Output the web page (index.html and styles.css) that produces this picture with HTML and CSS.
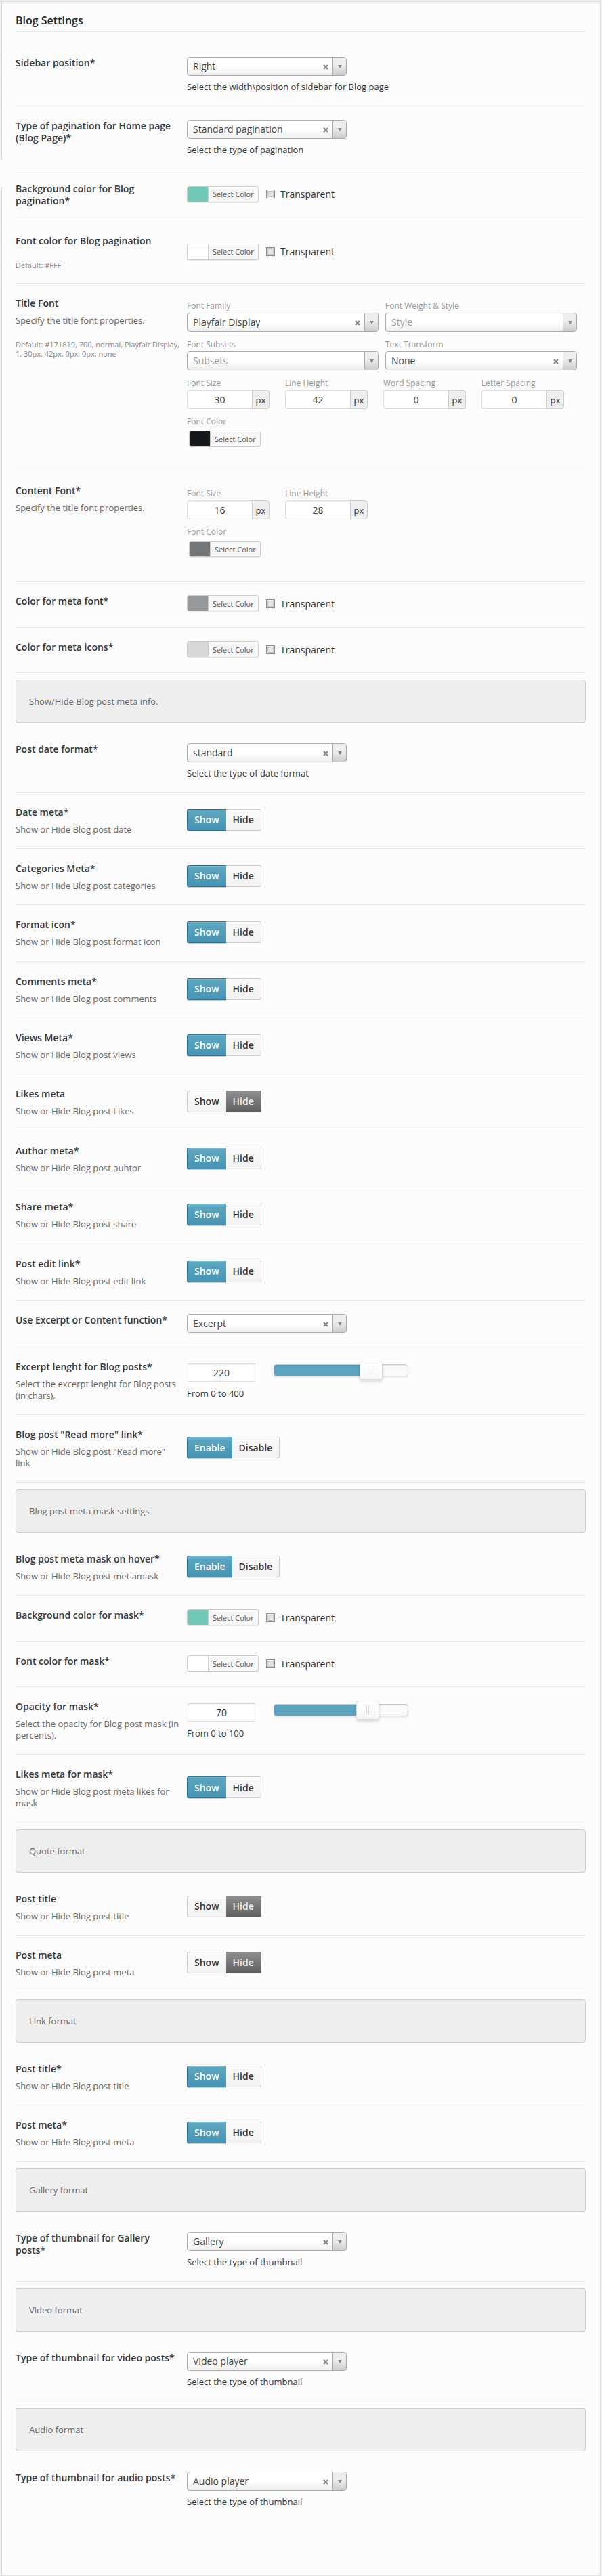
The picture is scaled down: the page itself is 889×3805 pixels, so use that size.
FILE: index.html
```
<!DOCTYPE html>
<html lang="en">
<head>
<meta charset="utf-8">
<meta name="viewport" content="width=device-width, initial-scale=1">
<title>Blog Settings</title>
<link rel="stylesheet" href="styles.css">
</head>
<body>
<div class="shell">
<div class="rail" aria-hidden="true">
<span class="rail-item"></span><span class="rail-item"></span><span class="rail-item"></span><span class="rail-item"></span><span class="rail-item"></span><span class="rail-item"></span>
<span class="rail-item rail-current"></span>
<span class="rail-item"></span><span class="rail-item"></span><span class="rail-item"></span><span class="rail-item"></span><span class="rail-rest"></span>
</div>
<main class="panel">
<h1 class="heading">Blog Settings</h1>

<section class="group">
<div class="row">
<div class="info"><label class="title" for="sidebar">Sidebar position*</label></div>
<div class="control"><div class="pick"><select id="sidebar"><option>Right</option></select><button class="clear" type="button" aria-label="Clear"><svg viewBox="0 0 8 8"><path d="M1 1L7 7M7 1L1 7"/></svg></button></div><p class="help">Select the width\position of sidebar for Blog page</p></div>
</div>
<div class="row">
<div class="info"><label class="title" for="pagination">Type of pagination for Home page (Blog Page)*</label></div>
<div class="control"><div class="pick"><select id="pagination"><option>Standard pagination</option></select><button class="clear" type="button" aria-label="Clear"><svg viewBox="0 0 8 8"><path d="M1 1L7 7M7 1L1 7"/></svg></button></div><p class="help">Select the type of pagination</p></div>
</div>
<div class="row loose">
<div class="info"><span class="title">Background color for Blog pagination*</span></div>
<div class="control color"><button class="swatch" type="button"><i class="teal"></i>Select Color</button><label class="check"><input type="checkbox">Transparent</label></div>
</div>
<div class="row">
<div class="info"><span class="title">Font color for Blog pagination</span><p class="default">Default: #FFF</p></div>
<div class="control color"><button class="swatch" type="button"><i class="white"></i>Select Color</button><label class="check"><input type="checkbox">Transparent</label></div>
</div>
<div class="row">
<div class="info"><span class="title">Title Font</span><p class="desc">Specify the title font properties.</p><p class="default">Default: #171819, 700, normal, Playfair Display, 1, 30px, 42px, 0px, 0px, none</p></div>
<div class="control fonts">
<div class="pair">
<div class="field"><label for="family">Font Family</label><div class="pick"><select id="family"><option>Playfair Display</option></select><button class="clear" type="button" aria-label="Clear"><svg viewBox="0 0 8 8"><path d="M1 1L7 7M7 1L1 7"/></svg></button></div></div>
<div class="field"><label for="weight">Font Weight &amp; Style</label><div class="pick empty"><select id="weight"><option>Style</option></select></div></div>
<div class="field"><label for="subsets">Font Subsets</label><div class="pick empty"><select id="subsets"><option>Subsets</option></select></div></div>
<div class="field"><label for="transform">Text Transform</label><div class="pick"><select id="transform"><option>None</option></select><button class="clear" type="button" aria-label="Clear"><svg viewBox="0 0 8 8"><path d="M1 1L7 7M7 1L1 7"/></svg></button></div></div>
</div>
<div class="units">
<div class="field"><label for="size1">Font Size</label><div class="unit"><input id="size1" type="text" value="30"><span>px</span></div></div>
<div class="field"><label for="line1">Line Height</label><div class="unit"><input id="line1" type="text" value="42"><span>px</span></div></div>
<div class="field"><label for="word1">Word Spacing</label><div class="unit"><input id="word1" type="text" value="0"><span>px</span></div></div>
<div class="field"><label for="letter1">Letter Spacing</label><div class="unit"><input id="letter1" type="text" value="0"><span>px</span></div></div>
</div>
<div class="field inset"><label for="color1">Font Color</label><button class="swatch" id="color1" type="button"><i class="ink"></i>Select Color</button></div>
</div>
</div>
<div class="row">
<div class="info"><span class="title">Content Font*</span><p class="desc">Specify the title font properties.</p></div>
<div class="control fonts">
<div class="units">
<div class="field"><label for="size2">Font Size</label><div class="unit"><input id="size2" type="text" value="16"><span>px</span></div></div>
<div class="field"><label for="line2">Line Height</label><div class="unit"><input id="line2" type="text" value="28"><span>px</span></div></div>
</div>
<div class="field inset"><label for="color2">Font Color</label><button class="swatch" id="color2" type="button"><i class="slate"></i>Select Color</button></div>
</div>
</div>
<div class="row loose">
<div class="info"><span class="title">Color for meta font*</span></div>
<div class="control color"><button class="swatch" type="button"><i class="gray"></i>Select Color</button><label class="check"><input type="checkbox">Transparent</label></div>
</div>
<div class="row">
<div class="info"><span class="title">Color for meta icons*</span></div>
<div class="control color"><button class="swatch" type="button"><i class="silver"></i>Select Color</button><label class="check"><input type="checkbox">Transparent</label></div>
</div>
</section>

<p class="banner">Show/Hide Blog post meta info.</p>

<section class="group">
<div class="row">
<div class="info"><label class="title" for="dateformat">Post date format*</label></div>
<div class="control"><div class="pick"><select id="dateformat"><option>standard</option></select><button class="clear" type="button" aria-label="Clear"><svg viewBox="0 0 8 8"><path d="M1 1L7 7M7 1L1 7"/></svg></button></div><p class="help">Select the type of date format</p></div>
</div>
<div class="row">
<div class="info"><span class="title">Date meta*</span><p class="desc">Show or Hide Blog post date</p></div>
<div class="control toggle"><button class="on" type="button" aria-pressed="true">Show</button><button type="button">Hide</button></div>
</div>
<div class="row">
<div class="info"><span class="title">Categories Meta*</span><p class="desc">Show or Hide Blog post categories</p></div>
<div class="control toggle"><button class="on" type="button" aria-pressed="true">Show</button><button type="button">Hide</button></div>
</div>
<div class="row loose">
<div class="info"><span class="title">Format icon*</span><p class="desc">Show or Hide Blog post format icon</p></div>
<div class="control toggle"><button class="on" type="button" aria-pressed="true">Show</button><button type="button">Hide</button></div>
</div>
<div class="row">
<div class="info"><span class="title">Comments meta*</span><p class="desc">Show or Hide Blog post comments</p></div>
<div class="control toggle"><button class="on" type="button" aria-pressed="true">Show</button><button type="button">Hide</button></div>
</div>
<div class="row">
<div class="info"><span class="title">Views Meta*</span><p class="desc">Show or Hide Blog post views</p></div>
<div class="control toggle"><button class="on" type="button" aria-pressed="true">Show</button><button type="button">Hide</button></div>
</div>
<div class="row loose">
<div class="info"><span class="title">Likes meta</span><p class="desc">Show or Hide Blog post Likes</p></div>
<div class="control toggle"><button type="button">Show</button><button class="off" type="button" aria-pressed="true">Hide</button></div>
</div>
<div class="row">
<div class="info"><span class="title">Author meta*</span><p class="desc">Show or Hide Blog post auhtor</p></div>
<div class="control toggle"><button class="on" type="button" aria-pressed="true">Show</button><button type="button">Hide</button></div>
</div>
<div class="row loose">
<div class="info"><span class="title">Share meta*</span><p class="desc">Show or Hide Blog post share</p></div>
<div class="control toggle"><button class="on" type="button" aria-pressed="true">Show</button><button type="button">Hide</button></div>
</div>
<div class="row">
<div class="info"><span class="title">Post edit link*</span><p class="desc">Show or Hide Blog post edit link</p></div>
<div class="control toggle"><button class="on" type="button" aria-pressed="true">Show</button><button type="button">Hide</button></div>
</div>
<div class="row loose">
<div class="info"><label class="title" for="excerpt">Use Excerpt or Content function*</label></div>
<div class="control"><div class="pick"><select id="excerpt"><option>Excerpt</option></select><button class="clear" type="button" aria-label="Clear"><svg viewBox="0 0 8 8"><path d="M1 1L7 7M7 1L1 7"/></svg></button></div></div>
</div>
<div class="row">
<div class="info"><label class="title" for="length">Excerpt lenght for Blog posts*</label><p class="desc">Select the excerpt lenght for Blog posts (in chars).</p></div>
<div class="control"><div class="slide"><input class="amount" id="length" type="text" value="220"><input class="range" type="range" min="0" max="400" value="310" aria-label="Excerpt length" style="--fill:73%"></div><p class="help">From 0 to 400</p></div>
</div>
<div class="row">
<div class="info"><span class="title">Blog post "Read more" link*</span><p class="desc">Show or Hide Blog post "Read more" link</p></div>
<div class="control toggle"><button class="on" type="button" aria-pressed="true">Enable</button><button type="button">Disable</button></div>
</div>
</section>

<p class="banner">Blog post meta mask settings</p>

<section class="group">
<div class="row">
<div class="info"><span class="title">Blog post meta mask on hover*</span><p class="desc">Show or Hide Blog post met amask</p></div>
<div class="control toggle"><button class="on" type="button" aria-pressed="true">Enable</button><button type="button">Disable</button></div>
</div>
<div class="row loose">
<div class="info"><span class="title">Background color for mask*</span></div>
<div class="control color"><button class="swatch" type="button"><i class="teal"></i>Select Color</button><label class="check"><input type="checkbox">Transparent</label></div>
</div>
<div class="row">
<div class="info"><span class="title">Font color for mask*</span></div>
<div class="control color"><button class="swatch" type="button"><i class="white"></i>Select Color</button><label class="check"><input type="checkbox">Transparent</label></div>
</div>
<div class="row">
<div class="info"><label class="title" for="opacity">Opacity for mask*</label><p class="desc">Select the opacity for Blog post mask (in percents).</p></div>
<div class="control"><div class="slide"><input class="amount" id="opacity" type="text" value="70"><input class="range" type="range" min="0" max="100" value="74" aria-label="Opacity" style="--fill:70%"></div><p class="help">From 0 to 100</p></div>
</div>
<div class="row">
<div class="info"><span class="title">Likes meta for mask*</span><p class="desc">Show or Hide Blog post meta likes for mask</p></div>
<div class="control toggle"><button class="on" type="button" aria-pressed="true">Show</button><button type="button">Hide</button></div>
</div>
</section>

<p class="banner">Quote format</p>

<section class="group">
<div class="row">
<div class="info"><span class="title">Post title</span><p class="desc">Show or Hide Blog post title</p></div>
<div class="control toggle"><button type="button">Show</button><button class="off" type="button" aria-pressed="true">Hide</button></div>
</div>
<div class="row loose">
<div class="info"><span class="title">Post meta</span><p class="desc">Show or Hide Blog post meta</p></div>
<div class="control toggle"><button type="button">Show</button><button class="off" type="button" aria-pressed="true">Hide</button></div>
</div>
</section>

<p class="banner">Link format</p>

<section class="group">
<div class="row">
<div class="info"><span class="title">Post title*</span><p class="desc">Show or Hide Blog post title</p></div>
<div class="control toggle"><button class="on" type="button" aria-pressed="true">Show</button><button type="button">Hide</button></div>
</div>
<div class="row">
<div class="info"><span class="title">Post meta*</span><p class="desc">Show or Hide Blog post meta</p></div>
<div class="control toggle"><button class="on" type="button" aria-pressed="true">Show</button><button type="button">Hide</button></div>
</div>
</section>

<p class="banner">Gallery format</p>

<section class="group">
<div class="row">
<div class="info"><label class="title" for="gallery">Type of thumbnail for Gallery posts*</label></div>
<div class="control"><div class="pick"><select id="gallery"><option>Gallery</option></select><button class="clear" type="button" aria-label="Clear"><svg viewBox="0 0 8 8"><path d="M1 1L7 7M7 1L1 7"/></svg></button></div><p class="help">Select the type of thumbnail</p></div>
</div>
</section>

<p class="banner">Video format</p>

<section class="group">
<div class="row">
<div class="info"><label class="title" for="video">Type of thumbnail for video posts*</label></div>
<div class="control"><div class="pick"><select id="video"><option>Video player</option></select><button class="clear" type="button" aria-label="Clear"><svg viewBox="0 0 8 8"><path d="M1 1L7 7M7 1L1 7"/></svg></button></div><p class="help">Select the type of thumbnail</p></div>
</div>
</section>

<p class="banner">Audio format</p>

<section class="group last">
<div class="row">
<div class="info"><label class="title" for="audio">Type of thumbnail for audio posts*</label></div>
<div class="control"><div class="pick"><select id="audio"><option>Audio player</option></select><button class="clear" type="button" aria-label="Clear"><svg viewBox="0 0 8 8"><path d="M1 1L7 7M7 1L1 7"/></svg></button></div><p class="help">Select the type of thumbnail</p></div>
</div>
</section>
</main>
</div>
</body>
</html>
```
FILE: styles.css
```
* { box-sizing: border-box; }

body {
  margin: 0;
  padding: 2px 2px 0 0;
  background: #f1f1f1;
  color: #333;
  font-family: "Open Sans", "Noto Sans", sans-serif;
  font-size: 13px;
  line-height: 17px;
}

p, h1 { margin: 0; }

button, input, select { font-family: inherit; color: inherit; margin: 0; }

.shell {
  display: flex;
  border-top: 1px solid #dedede;
  border-right: 1px solid #dedede;
  border-bottom: 1px solid #dedede;
  background: #fcfcfc;
}

/* Edge of the side menu */
.rail { display: flex; flex-direction: column; width: 3px; }

.rail-item {
  height: 39px;
  border-right: 1px solid #d8d8d8;
  border-bottom: 1px solid #e4e4e4;
  background: #f3f3f3;
}

.rail-current { border: 0; background: #fcfcfc; }

.rail-rest { flex: 1; border-right: 1px solid #d8d8d8; background: #f1f1f1; }

.panel { flex: 1; min-width: 0; padding: 16px 21px 0 20px; }

.heading {
  padding-bottom: 4px;
  border-bottom: 1px solid #e7e7e7;
  margin-bottom: 17px;
  color: #23282d;
  font-size: 16px;
  font-weight: 600;
  line-height: 23px;
}

.row {
  display: flex;
  padding: 20px 0 19px;
  border-bottom: 1px solid #e7e7e7;
}

.row.loose { padding-bottom: 20px; }

.last { padding-bottom: 80px; }
.last .row { border-bottom-color: transparent; }

.info { flex: 0 0 253px; padding-right: 10px; }

.title {
  display: block;
  color: #32373c;
  font-size: 14px;
  font-weight: 600;
  line-height: 18px;
}

.desc { margin-top: 8px; color: #666; }

.default {
  margin-top: 20px;
  margin-right: -10px;
  color: #888;
  font-size: 11px;
  line-height: 14px;
}

.control { flex: 1; min-width: 0; }

.help { margin-top: 8px; }

.banner {
  margin: 10px 0;
  padding: 23px 19px;
  border: 1px solid #ccc;
  border-radius: 4px;
  background: #eee;
  color: #666;
  line-height: 16px;
}

/* Drop-downs */
.pick { position: relative; width: 236px; height: 28px; }

.pick select {
  display: block;
  width: 100%;
  height: 28px;
  padding: 0 24px 1px 8px;
  border: 1px solid #aaa;
  border-radius: 4px;
  appearance: none;
  background: linear-gradient(#fff 50%, #eee);
  color: #444;
  font-size: 14px;
}

.pick.empty select { color: #999; }

.pick::before {
  content: "";
  position: absolute;
  top: 1px;
  right: 1px;
  bottom: 1px;
  width: 19px;
  border-left: 1px solid #aaa;
  border-radius: 0 3px 3px 0;
  background: linear-gradient(#eee 40%, #ccc);
  pointer-events: none;
}

.pick::after {
  content: "";
  position: absolute;
  top: 12px;
  right: 7px;
  border: 3px solid transparent;
  border-top: 5px solid #888;
  border-bottom: 0;
  pointer-events: none;
}

.clear {
  position: absolute;
  top: 11px;
  right: 27px;
  width: 8px;
  height: 8px;
  padding: 0;
  border: 0;
  background: none;
}

.clear svg { display: block; fill: none; stroke: #888; stroke-width: 2.4; }

/* Colour pickers */
.color { display: flex; align-self: center; height: 27px; }

.swatch {
  display: flex;
  align-items: center;
  width: 106px;
  height: 24px;
  padding: 0;
  border: 1px solid #ccc;
  border-radius: 3px;
  background: #f7f7f7;
  box-shadow: inset 0 1px 0 #fff, 0 1px 0 rgba(0, 0, 0, .08);
  color: #555;
  font-size: 11px;
}

.swatch i {
  align-self: stretch;
  width: 31px;
  margin-right: 6px;
  border-right: 1px solid #ccc;
  border-radius: 2px 0 0 2px;
}

.teal { background: #72c8b7; }
.white { background: #fff; }
.ink { background: #171819; }
.slate { background: #747576; }
.gray { background: #979899; }
.silver { background: #d7d7d7; }

.check {
  display: flex;
  align-items: center;
  gap: 8px;
  height: 24px;
  margin-left: 11px;
  font-size: 14px;
}

.check input {
  width: 13px;
  height: 13px;
  border: 1px solid #8e8f8f;
  appearance: none;
  background: linear-gradient(135deg, #cbcfd5, #f6f6f6);
  box-shadow: inset 0 0 0 1px #f4f4f4, inset 0 0 0 2px #c4c8ce;
}

/* Typography fields */
.fonts { display: grid; gap: 11px; align-content: start; padding: 5px 0 16px; }

.pair {
  display: grid;
  grid-template-columns: 1fr 1fr;
  gap: 11px 10px;
  padding-right: 13px;
}

.field label {
  display: block;
  margin-bottom: 2px;
  color: #999;
  font-size: 12px;
  line-height: 16px;
}

.field .pick { width: auto; }

.units { display: flex; flex-wrap: wrap; gap: 11px 23px; }

.unit { display: flex; width: 122px; height: 28px; }

.unit input {
  flex: 1;
  min-width: 0;
  padding: 0;
  border: 1px solid #ddd;
  border-right: 0;
  border-radius: 4px 0 0 4px;
  background: #fff;
  box-shadow: inset 0 1px 2px rgba(0, 0, 0, .07);
  font-size: 14px;
  text-align: center;
}

.unit span {
  width: 26px;
  padding-top: 6px;
  border: 1px solid #ccc;
  border-radius: 0 4px 4px 0;
  background: #eee;
  font-size: 13px;
  text-align: center;
}

.inset .swatch { margin: 5px 0 0 3px; }

/* Two-way switches */
.toggle { display: flex; align-self: center; height: 36px; }

.toggle button {
  height: 32px;
  padding: 0 10px;
  border: 1px solid #ccc;
  background: linear-gradient(#fafafa, #f2f2f2);
  font-size: 14px;
  font-weight: 600;
}

.toggle button:first-child { border-right: 0; border-radius: 3px 0 0 3px; }
.toggle button:last-child { border-left: 0; border-radius: 0 3px 3px 0; }

.toggle .on {
  border-color: #31708a;
  background: linear-gradient(#5fa7c1, #4594b3);
  box-shadow: inset 0 1px 0 #7ab9cf, 0 1px 0 #ccc;
  color: #fff;
}

.toggle .off {
  border-color: #666;
  background: linear-gradient(#8e8e8e, #606060);
  color: #eee;
}

/* Sliders */
.slide { display: flex; align-items: flex-start; gap: 27px; }

.amount {
  width: 100px;
  height: 27px;
  margin: 4px 0 1px 1px;
  padding: 0;
  border: 1px solid #ddd;
  background: #fff;
  box-shadow: inset 0 1px 2px rgba(0, 0, 0, .07);
  font-size: 14px;
  text-align: center;
}

.range {
  width: 199px;
  height: 28px;
  appearance: none;
  background: none;
}

.range::-webkit-slider-runnable-track {
  height: 18px;
  border: 1px solid #c5cdd1;
  border-radius: 4px;
  background: linear-gradient(90deg, #5ba3be var(--fill), #fafafa var(--fill));
  box-shadow: inset 0 1px 1px rgba(0, 0, 0, .1), 0 2px 3px rgba(0, 0, 0, .08);
}

.range::-webkit-slider-thumb {
  width: 34px;
  height: 28px;
  margin-top: -6px;
  border: 1px solid #d9d9d9;
  border-radius: 3px;
  appearance: none;
  background:
    linear-gradient(90deg, #ddd 1px, transparent 1px 3px, #ddd 3px) center / 4px 14px no-repeat,
    linear-gradient(#fff, #f7f7f7);
  box-shadow: 0 3px 4px rgba(0, 0, 0, .15);
}
```
